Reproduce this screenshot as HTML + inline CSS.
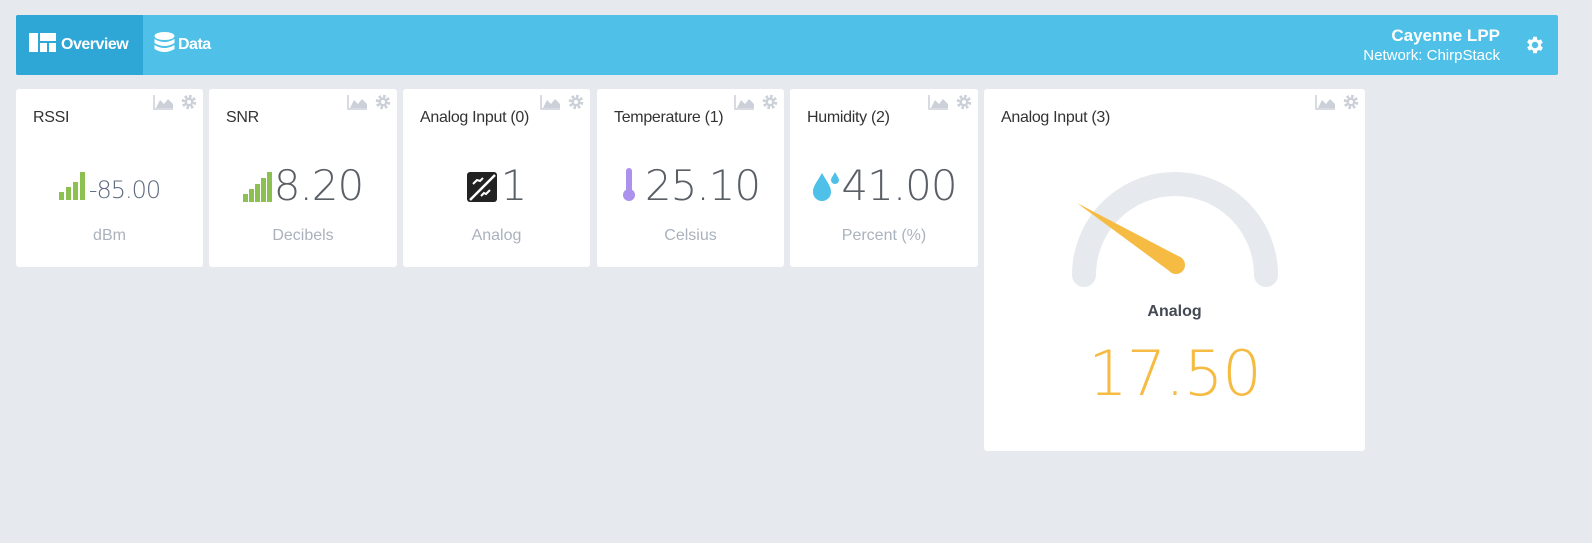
<!DOCTYPE html>
<html><head><style>
body{margin:0;width:1592px;height:543px;background:#e6e9ee;font-family:"Liberation Sans",sans-serif;position:relative;overflow:hidden}
.nav{position:absolute;left:16px;top:15px;width:1542px;height:60px;background:#4fc0e8;border-radius:2px}
.tab{position:absolute;top:0;height:60px;color:#fff;font-weight:bold;font-size:16px;line-height:60px;letter-spacing:-0.5px}
.card{position:absolute;top:89px;height:178px;background:#fff;border-radius:3px}
.t{position:absolute;left:17px;top:20px;font-size:16px;color:#333;letter-spacing:-0.3px}
.ic{position:absolute;top:4px;right:5px}
.v{position:absolute;left:0;right:0;top:72px;text-align:center;font-size:42px;color:#5a5f66;font-family:"DejaVu Sans","Liberation Sans",sans-serif;font-weight:200;letter-spacing:-1px;line-height:50px}
.u{position:absolute;left:0;right:0;top:138px;text-align:center;font-size:16px;color:#aab2bd}
</style></head><body>
<div class="nav">
 <div class="tab" style="left:0;width:127px;background:#2ea6d6;border-radius:2px 0 0 2px">
  <svg style="position:absolute;left:13px;top:18px" width="27" height="19"><rect x="0" y="0" width="9" height="19" fill="#fff"/><rect x="11" y="0" width="16" height="8" fill="#fff"/><rect x="11" y="10" width="7" height="9" fill="#fff"/><rect x="20" y="10" width="7" height="9" fill="#fff"/></svg>
  <span style="position:absolute;left:45px">Overview</span></div>
 <div class="tab" style="left:138px">
  <svg style="position:absolute;left:0;top:17px" width="21" height="24"><ellipse cx="10.5" cy="4" rx="10" ry="4" fill="#fff"/><path d="M0.5 7 Q10.5 13 20.5 7 V11 Q10.5 17 0.5 11Z M0.5 13 Q10.5 19 20.5 13 V17 Q10.5 23 0.5 17Z" fill="#fff"/></svg>
  <span style="position:absolute;left:24px">Data</span></div>
 <div style="position:absolute;right:58px;top:11px;text-align:right;color:#fff;line-height:19px"><b style="font-size:17px">Cayenne LPP</b><br><span style="font-size:15px">Network: ChirpStack</span></div>
 <svg style="position:absolute;right:12px;top:19px" width="22" height="22" viewBox="0 0 24 24"><path fill="#fff" d="M19.4 13a7.5 7.5 0 0 0 0-2l2.1-1.6-2-3.5-2.5 1a7 7 0 0 0-1.7-1L15 3h-4l-.4 2.6a7 7 0 0 0-1.7 1l-2.5-1-2 3.5L6.6 11a7.5 7.5 0 0 0 0 2l-2.1 1.6 2 3.5 2.5-1a7 7 0 0 0 1.7 1L11 21h4l.4-2.6a7 7 0 0 0 1.7-1l2.5 1 2-3.5zM13 15.5a3.5 3.5 0 1 1 0-7 3.5 3.5 0 0 1 0 7z" transform="translate(-1 0)"/></svg>
</div>

<div class="card" style="left:16px;width:187px">
 <svg class="ic" width="45" height="18"><path d="M1 2V16H20" stroke="#ccd1d9" stroke-width="1.5" fill="none"/><path d="M3 15 L7 7 L11 11 L15 6 L20 11 V15Z" fill="#ccd1d9"/><g transform="translate(36 9)"><circle r="5.5" fill="none" stroke="#ccd1d9" stroke-width="3.5" stroke-dasharray="2.5 1.8"/><circle r="4.5" fill="#ccd1d9"/><circle r="2" fill="#fff"/></g></svg>
 <div class="t">RSSI</div>
 <div class="v" style="font-size:24px;color:#5d6a80;top:76px"><svg width="30" height="28" style="vertical-align:-2px"><rect x="0" y="20" width="5" height="8" fill="#8cc152"/><rect x="7" y="15" width="5" height="13" fill="#8cc152"/><rect x="14" y="10" width="5" height="18" fill="#8cc152"/><rect x="21" y="0" width="5" height="28" fill="#8cc152"/></svg>-85.00</div>
 <div class="u">dBm</div>
</div>
<div class="card" style="left:209px;width:188px">
 <svg class="ic" width="45" height="18"><path d="M1 2V16H20" stroke="#ccd1d9" stroke-width="1.5" fill="none"/><path d="M3 15 L7 7 L11 11 L15 6 L20 11 V15Z" fill="#ccd1d9"/><g transform="translate(36 9)"><circle r="5.5" fill="none" stroke="#ccd1d9" stroke-width="3.5" stroke-dasharray="2.5 1.8"/><circle r="4.5" fill="#ccd1d9"/><circle r="2" fill="#fff"/></g></svg>
 <div class="t">SNR</div>
 <div class="v"><svg width="31" height="30" style="vertical-align:-2px"><rect x="0" y="22" width="5" height="8" fill="#8cc152"/><rect x="6" y="17" width="5" height="13" fill="#8cc152"/><rect x="12" y="12" width="5" height="18" fill="#8cc152"/><rect x="18" y="6" width="5" height="24" fill="#8cc152"/><rect x="24" y="0" width="5" height="30" fill="#8cc152"/></svg>8.20</div>
 <div class="u">Decibels</div>
</div>
<div class="card" style="left:403px;width:187px">
 <svg class="ic" width="45" height="18"><path d="M1 2V16H20" stroke="#ccd1d9" stroke-width="1.5" fill="none"/><path d="M3 15 L7 7 L11 11 L15 6 L20 11 V15Z" fill="#ccd1d9"/><g transform="translate(36 9)"><circle r="5.5" fill="none" stroke="#ccd1d9" stroke-width="3.5" stroke-dasharray="2.5 1.8"/><circle r="4.5" fill="#ccd1d9"/><circle r="2" fill="#fff"/></g></svg>
 <div class="t">Analog Input (0)</div>
 <div class="v"><svg width="34" height="30" style="vertical-align:-2px"><rect width="30" height="30" rx="3" fill="#222"/><path d="M3 28 L28 3" stroke="#fff" stroke-width="2.5"/><path d="M6 12 L10 8 L13 9 L16 6" stroke="#fff" stroke-width="2" fill="none"/><path d="M14 24 L17 21 L19 22 L23 18" stroke="#fff" stroke-width="2" fill="none"/></svg>1</div>
 <div class="u">Analog</div>
</div>
<div class="card" style="left:597px;width:187px">
 <svg class="ic" width="45" height="18"><path d="M1 2V16H20" stroke="#ccd1d9" stroke-width="1.5" fill="none"/><path d="M3 15 L7 7 L11 11 L15 6 L20 11 V15Z" fill="#ccd1d9"/><g transform="translate(36 9)"><circle r="5.5" fill="none" stroke="#ccd1d9" stroke-width="3.5" stroke-dasharray="2.5 1.8"/><circle r="4.5" fill="#ccd1d9"/><circle r="2" fill="#fff"/></g></svg>
 <div class="t">Temperature (1)</div>
 <div class="v"><svg width="24" height="34" style="vertical-align:-2px"><rect x="5" y="0" width="6" height="26" rx="3" fill="#ac92ec"/><circle cx="8" cy="27" r="6" fill="#ac92ec"/></svg>25.10</div>
 <div class="u">Celsius</div>
</div>
<div class="card" style="left:790px;width:188px">
 <svg class="ic" width="45" height="18"><path d="M1 2V16H20" stroke="#ccd1d9" stroke-width="1.5" fill="none"/><path d="M3 15 L7 7 L11 11 L15 6 L20 11 V15Z" fill="#ccd1d9"/><g transform="translate(36 9)"><circle r="5.5" fill="none" stroke="#ccd1d9" stroke-width="3.5" stroke-dasharray="2.5 1.8"/><circle r="4.5" fill="#ccd1d9"/><circle r="2" fill="#fff"/></g></svg>
 <div class="t">Humidity (2)</div>
 <div class="v"><svg width="30" height="32" style="vertical-align:-2px"><path d="M11 3 C6 12 2 16 2 22 A9 9 0 0 0 20 22 C20 16 16 12 11 3Z" fill="#4fc0e8"/><path d="M24 2 C22 6 20 8 20 10 A4 4 0 0 0 28 10 C28 8 26 6 24 2Z" fill="#4fc0e8"/></svg>41.00</div>
 <div class="u">Percent (%)</div>
</div>
<div class="card" style="left:984px;width:381px;height:362px">
 <svg class="ic" width="45" height="18"><path d="M1 2V16H20" stroke="#ccd1d9" stroke-width="1.5" fill="none"/><path d="M3 15 L7 7 L11 11 L15 6 L20 11 V15Z" fill="#ccd1d9"/><g transform="translate(36 9)"><circle r="5.5" fill="none" stroke="#ccd1d9" stroke-width="3.5" stroke-dasharray="2.5 1.8"/><circle r="4.5" fill="#ccd1d9"/><circle r="2" fill="#fff"/></g></svg>
 <div class="t">Analog Input (3)</div>
 <svg style="position:absolute;left:0;top:0" width="381" height="200"><path d="M100 186 A91 91 0 0 1 282 186" stroke="#e6e9ed" stroke-width="24" fill="none" stroke-linecap="round"/><path d="M93 114 L198 169 L188 184Z" fill="#f6bb42"/><circle cx="192" cy="176" r="9" fill="#f6bb42"/></svg>
 <div style="position:absolute;left:0;right:0;top:214px;text-align:center;font-size:16px;font-weight:bold;color:#434a54">Analog</div>
 <div style="position:absolute;left:0;right:0;top:248px;text-align:center;font-size:62px;color:#f6bb42;font-family:'DejaVu Sans','Liberation Sans',sans-serif;font-weight:200;letter-spacing:-1px">17.50</div>
</div>
</body></html>
